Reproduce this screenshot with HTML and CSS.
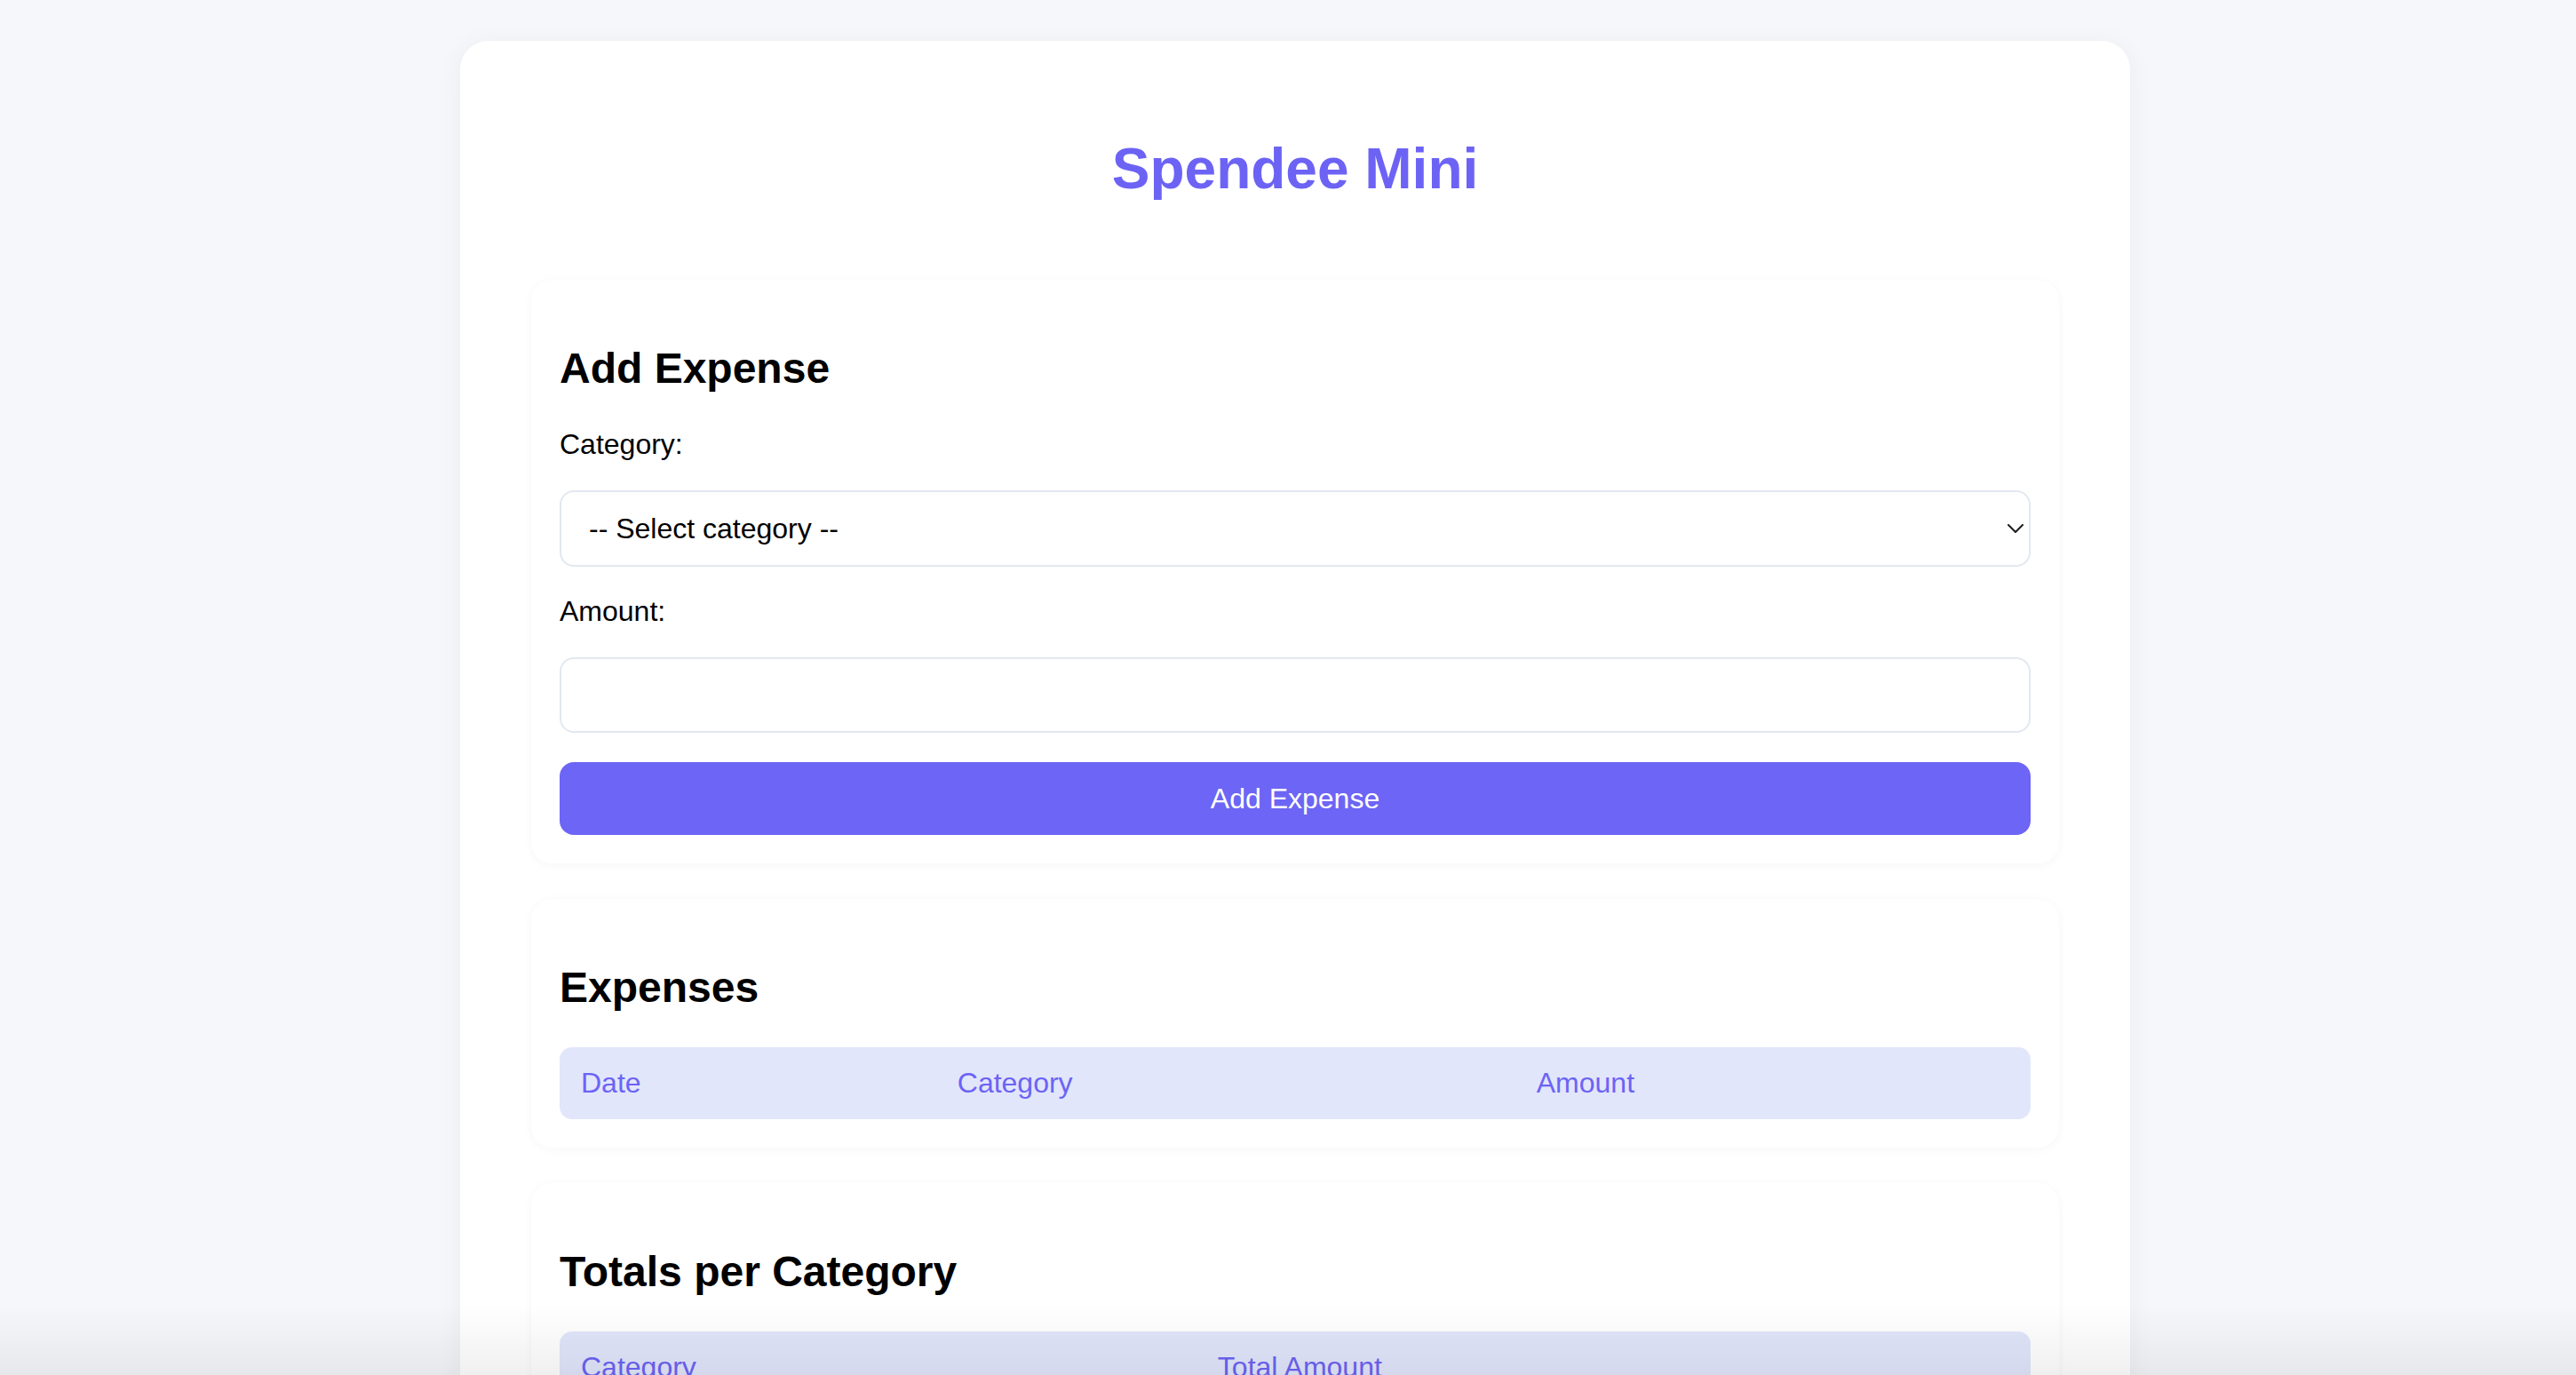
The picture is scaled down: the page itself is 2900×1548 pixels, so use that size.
FILE: index.html
```html
<!DOCTYPE html>
<html lang="en">
<head>
<meta charset="utf-8">
<title>Spendee Mini</title>
<link rel="stylesheet" href="styles.css">
</head>
<body>
<main class="app">
  <h1 class="app-title">Spendee Mini</h1>

  <section class="card">
    <h2 class="card-title">Add Expense</h2>
    <form class="expense-form">
      <label class="field-label" for="category">Category:</label>
      <div class="select-wrap">
        <select id="category" class="field select-field">
          <option>-- Select category --</option>
          <option>Food</option>
          <option>Transport</option>
          <option>Shopping</option>
        </select>
        <svg class="select-arrow" width="18" height="10" viewBox="0 0 18 10" aria-hidden="true">
          <polyline points="1,1 9,9 17,1" fill="none" stroke="#1c1c1c" stroke-width="2" stroke-linecap="round" stroke-linejoin="round"/>
        </svg>
      </div>
      <label class="field-label" for="amount">Amount:</label>
      <input id="amount" class="field input-field" type="text">
      <button type="button" class="btn-primary">Add Expense</button>
    </form>
  </section>

  <section class="card">
    <h2 class="card-title">Expenses</h2>
    <table class="data-table">
      <thead>
        <tr><th>Date</th><th>Category</th><th>Amount</th></tr>
      </thead>
      <tbody></tbody>
    </table>
  </section>

  <section class="card">
    <h2 class="card-title">Totals per Category</h2>
    <table class="data-table">
      <thead>
        <tr><th>Category</th><th>Total Amount</th></tr>
      </thead>
      <tbody></tbody>
    </table>
  </section>
</main>
<div class="bottom-fade" aria-hidden="true"></div>
</body>
</html>
```
FILE: styles.css
```css
* { box-sizing: border-box; }

html, body {
  margin: 0;
  padding: 0;
}

body {
  background: #f5f7fa;
  font-family: "Liberation Sans", Arial, Helvetica, sans-serif;
  font-size: 32px;
  color: #000;
}

.app {
  width: 1880px;
  margin: 46px 0 0 518px;
  padding: 80px 80px 80px;
  background: #ffffff;
  border-radius: 32px;
  box-shadow: 0 4px 30px rgba(30, 40, 80, 0.05);
}

.app-title {
  margin: 27px 0 88px;
  font-size: 64px;
  line-height: 74px;
  font-weight: 700;
  text-align: center;
  color: #6c63f5;
}

.card {
  background: #ffffff;
  border-radius: 24px;
  padding: 32px;
  margin-bottom: 40px;
  box-shadow: 0 2px 12px rgba(30, 40, 80, 0.04);
}

.card-title {
  margin: 40px 0;
  font-size: 48px;
  line-height: 55px;
  font-weight: 700;
}

.expense-form {
  display: flex;
  flex-direction: column;
}

.field-label {
  display: block;
  line-height: 37px;
  margin-bottom: 33px;
}

.field {
  width: 100%;
  border: 2px solid #e2e8f0;
  border-radius: 16px;
  background: #fff;
  font-family: inherit;
  font-size: 32px;
  color: #000;
  outline: none;
}

.select-wrap {
  position: relative;
  margin-bottom: 32px;
}

.select-field {
  display: block;
  height: 86px;
  padding: 0 60px 0 31px;
  appearance: none;
  -webkit-appearance: none;
}

.select-arrow {
  position: absolute;
  right: 8px;
  top: 38px;
  pointer-events: none;
}

.input-field {
  height: 85px;
  padding: 0 31px;
  margin-bottom: 33px;
}

.btn-primary {
  height: 82px;
  width: 100%;
  border: none;
  border-radius: 16px;
  background: #6c65f5;
  color: #ffffff;
  font-family: inherit;
  font-size: 32px;
  cursor: pointer;
}

.data-table {
  width: 100%;
  border-collapse: separate;
  border-spacing: 0;
}

.data-table th {
  text-align: left;
  font-weight: 400;
  color: #6c63f5;
  background: #e1e6fb;
  padding: 22px 24px;
  line-height: 37px;
}

.data-table th:first-child {
  border-radius: 14px 0 0 14px;
}

.data-table th:last-child {
  border-radius: 0 14px 14px 0;
}

.bottom-fade {
  position: fixed;
  left: 0;
  right: 0;
  bottom: 0;
  height: 80px;
  pointer-events: none;
  background: linear-gradient(to bottom, rgba(0, 0, 0, 0), rgba(0, 0, 0, 0.06));
}
```
